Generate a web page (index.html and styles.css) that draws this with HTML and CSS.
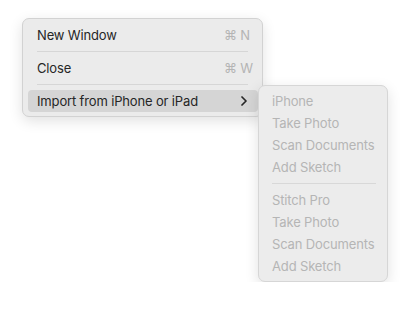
FILE: index.html
```html
<!DOCTYPE html>
<html lang="en">
<head>
  <meta charset="UTF-8" />
  <meta name="viewport" content="width=device-width, initial-scale=1.0"/>
  <title>File Menu</title>
  <link rel="stylesheet" href="styles.css">
</head>
<body>
  <div class="menu-area">
    <!-- Main menu -->
    <div class="menu">
      <div class="menu-item">
        <span class="label">New Window</span>
        <span class="shortcut">⌘ N</span>
      </div>
      <div class="separator"></div>
      <div class="menu-item">
        <span class="label">Close</span>
        <span class="shortcut">⌘ W</span>
      </div>
      <div class="separator"></div>
      <div class="menu-item active">
        <span class="label">Import from iPhone or iPad</span>
        <svg class="chevron" width="6" height="10" viewBox="0 0 6 10">
          <path d="M1 1 L5 5 L1 9" fill="none" stroke="#262626" stroke-width="1.7" stroke-linecap="round" stroke-linejoin="round"/>
        </svg>
      </div>
    </div>

    <!-- Submenu -->
    <div class="submenu">
      <div class="sub-item">iPhone</div>
      <div class="sub-item">Take Photo</div>
      <div class="sub-item">Scan Documents</div>
      <div class="sub-item">Add Sketch</div>
      <div class="sub-separator"></div>
      <div class="sub-item">Stitch Pro</div>
      <div class="sub-item">Take Photo</div>
      <div class="sub-item">Scan Documents</div>
      <div class="sub-item">Add Sketch</div>
    </div>
  </div>
</body>
</html>
```

FILE: styles.css
```css
body {
  margin: 0;
  background-color: #ffffff;
  font-family: 'Inter', 'Liberation Sans', sans-serif;
  font-size: 13px;
  letter-spacing: -0.15px;
  color: #262626;
}

.menu-area {
  display: flex;
  align-items: flex-start;
  padding: 18px 0 0 22px;
}

.menu {
  box-sizing: border-box;
  width: 241px;
  padding: 5px 4px 4px 5px;
  background-color: #ebebeb;
  border: 1px solid #d2d2d2;
  border-radius: 7px;
  box-shadow: 0 4px 14px rgba(0, 0, 0, 0.12);
}

.menu-item {
  display: flex;
  align-items: center;
  height: 22px;
  padding: 0 6px 0 9px;
  border-radius: 4px;
}

.menu-item .label {
  flex: 1;
}

.shortcut {
  width: 28px;
  white-space: nowrap;
  color: #b4b4b4;
}

.menu-item.active {
  background-color: #d5d5d5;
}

.chevron {
  margin-right: 5px;
}

.separator {
  height: 1px;
  margin: 5px 10px 5px 9px;
  background-color: #d6d6d6;
}

.submenu {
  box-sizing: border-box;
  width: 130px;
  margin: 67px 0 0 -5px;
  padding: 4px 0;
  background-color: #ececec;
  border: 1px solid #d6d6d6;
  border-radius: 7px;
  box-shadow: 0 4px 14px rgba(0, 0, 0, 0.12);
}

.sub-item {
  height: 22px;
  line-height: 22px;
  padding-left: 13px;
  color: #b5b5b5;
}

.sub-separator {
  height: 1px;
  margin: 5px 11px 5px 13px;
  background-color: #d8d8d8;
}
```
